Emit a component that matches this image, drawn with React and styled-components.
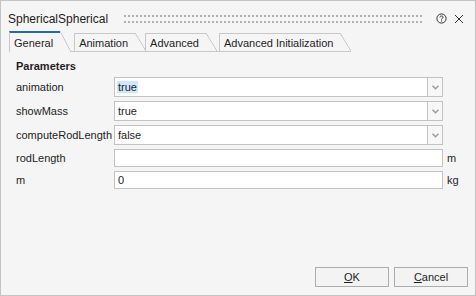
import React, { useState } from 'react';
import styled, { createGlobalStyle } from 'styled-components';

const GlobalStyle = createGlobalStyle`
  html, body {
    margin: 0;
    padding: 0;
    background: #f5f5f5;
  }
  * { box-sizing: border-box; }
`;

const Window = styled.div`
  width: 476px;
  height: 296px;
  border: 1px solid #c4c4c4;
  background: #f5f5f5;
  display: flex;
  flex-direction: column;
  font-family: "Liberation Sans", Arial, sans-serif;
  font-size: 11px;
  color: #1e1e1e;
`;

const TitleBar = styled.div`
  height: 25px;
  margin-top: 5px;
  padding: 0 8px 0 7px;
  display: flex;
  align-items: center;
`;

const Title = styled.div`
  font-size: 12px;
  color: #222;
`;

const Grip = styled.div`
  flex: 1;
  margin: 0 9px 0 16px;
  display: flex;
  flex-direction: column;
  gap: 4px;
  padding-top: 1px;
`;

const GripRow = styled.div`
  height: 2px;
  background: repeating-linear-gradient(90deg, #b0b0b0 0 2px, transparent 2px 4px);
`;

const TitleIcon = styled.button`
  width: 17px;
  height: 16px;
  padding: 0;
  border: none;
  background: none;
  display: flex;
  align-items: center;
  justify-content: center;
  color: #333;
`;

const TabBar = styled.div`
  align-self: flex-start;
  margin-left: 8px;
  height: 21px;
  display: flex;
  align-items: flex-end;
  border-bottom: 1px solid #c8c8c8;
  padding-right: 11px;
`;

const Tab = styled.div`
  position: relative;
  height: ${({ $active }) => ($active ? '21px' : '18px')};
  margin-bottom: ${({ $active }) => ($active ? '-1px' : '0')};
  margin-right: ${({ $gap }) => $gap}px;
  padding: 1px 7px 0 4px;
  border-left: 1px solid #c8c8c8;
  border-top: ${({ $active }) => ($active ? '2px solid #1a6fb0' : '1px solid #c8c8c8')};
  background: #f5f5f5;
  display: flex;
  align-items: center;
  color: #1e1e1e;
  white-space: nowrap;
  z-index: ${({ $active }) => ($active ? 2 : 1)};

  &::after {
    content: '';
    position: absolute;
    top: ${({ $active }) => ($active ? '-2px' : '-1px')};
    left: 100%;
    width: 11px;
    bottom: 0;
    background: linear-gradient(
      to top right,
      #f5f5f5 calc(50% - 0.7px),
      #c0c0c0 50%,
      transparent calc(50% + 0.7px)
    );
  }
`;

const Panel = styled.div`
  flex: 1;
  padding: 7px 8px 0 15px;
  display: flex;
  flex-direction: column;
`;

const GroupTitle = styled.div`
  font-weight: bold;
  line-height: 14px;
  height: 14px;
  margin-bottom: 4px;
`;

const Form = styled.div`
  display: grid;
  grid-template-columns: 98px 329px 1fr;
  row-gap: 4px;
  align-items: center;
`;

const Label = styled.div`
  white-space: nowrap;
`;

const Combo = styled.div`
  display: flex;
  height: 20px;
`;

const ComboText = styled.div`
  flex: 1;
  background: #fff;
  border: 1px solid #c2c2c2;
  padding: 0 2px;
  display: flex;
  align-items: center;
`;

const Selected = styled.span`
  padding: 0 1px;
  background: ${({ $on }) => ($on ? '#cce8ff' : 'transparent')};
`;

const ComboButton = styled.div`
  width: 15px;
  border: 1px solid #c2c2c2;
  border-left: none;
  background: #f7f7f7;
  display: flex;
  align-items: center;
  justify-content: center;
`;

const LineEdit = styled.div`
  height: 18px;
  background: #fff;
  border: 1px solid #c2c2c2;
  padding: 0 3px;
  display: flex;
  align-items: center;
`;

const Unit = styled.div`
  padding-left: 4px;
`;

const Footer = styled.div`
  display: flex;
  justify-content: flex-end;
  gap: 5px;
  padding: 0 7px 8px 0;
`;

const Button = styled.button`
  width: 74px;
  height: 20px;
  border: 1px solid #adadad;
  background: #f3f3f3;
  font-family: inherit;
  font-size: 11px;
  color: #1e1e1e;
  padding: 0;
  u { text-decoration: underline; }
`;

const Chevron = () => (
  <svg width="7" height="5" viewBox="0 0 7 5">
    <path d="M0.5 0.8 L3.5 3.8 L6.5 0.8" fill="none" stroke="#9a9a9a" strokeWidth="1.4" />
  </svg>
);

const tabs = [
  { name: 'General', gap: 14 },
  { name: 'Animation', gap: 10 },
  { name: 'Advanced', gap: 13 },
  { name: 'Advanced Initialization', gap: 0 },
];

const params = [
  { name: 'animation', kind: 'combo', value: 'true', selected: true },
  { name: 'showMass', kind: 'combo', value: 'true' },
  { name: 'computeRodLength', kind: 'combo', value: 'false' },
  { name: 'rodLength', kind: 'edit', value: '', unit: 'm' },
  { name: 'm', kind: 'edit', value: '0', unit: 'kg' },
];

export default function App() {
  const [active, setActive] = useState(0);

  return (
    <>
      <GlobalStyle />
      <Window>
        <TitleBar>
          <Title>SphericalSpherical</Title>
          <Grip>
            <GripRow />
            <GripRow />
          </Grip>
          <TitleIcon aria-label="help">
            <svg width="11" height="11" viewBox="0 0 11 11">
              <circle cx="5.5" cy="5.5" r="4.6" fill="none" stroke="#333" strokeWidth="1" />
              <path d="M3.9 4.3 C3.9 2.6 7.1 2.6 7.1 4.2 C7.1 5.3 5.5 5.2 5.5 6.5" fill="none" stroke="#333" strokeWidth="1" />
              <rect x="5" y="7.4" width="1" height="1.1" fill="#333" />
            </svg>
          </TitleIcon>
          <TitleIcon aria-label="close">
            <svg width="10" height="10" viewBox="0 0 10 10">
              <path d="M1 1 L9 9 M9 1 L1 9" stroke="#333" strokeWidth="1" />
            </svg>
          </TitleIcon>
        </TitleBar>

        <TabBar>
          {tabs.map((t, i) => (
            <Tab key={t.name} $active={i === active} $gap={t.gap} onClick={() => setActive(i)}>
              {t.name}
            </Tab>
          ))}
        </TabBar>

        <Panel>
          <GroupTitle>Parameters</GroupTitle>
          <Form>
            {params.map((p) => (
              <React.Fragment key={p.name}>
                <Label>{p.name}</Label>
                {p.kind === 'combo' ? (
                  <Combo>
                    <ComboText>
                      <Selected $on={p.selected}>{p.value}</Selected>
                    </ComboText>
                    <ComboButton>
                      <Chevron />
                    </ComboButton>
                  </Combo>
                ) : (
                  <LineEdit>{p.value}</LineEdit>
                )}
                <Unit>{p.unit}</Unit>
              </React.Fragment>
            ))}
          </Form>
        </Panel>

        <Footer>
          <Button><u>O</u>K</Button>
          <Button><u>C</u>ancel</Button>
        </Footer>
      </Window>
    </>
  );
}
